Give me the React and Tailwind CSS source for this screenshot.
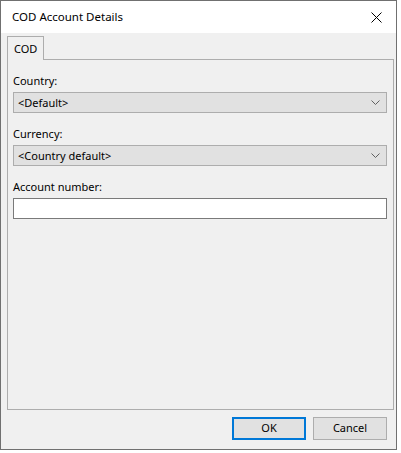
import React from 'react';

const font = { fontFamily: '"Segoe UI", "Noto Sans", "Liberation Sans", sans-serif' };

function Chevron() {
  return (
    <svg width="9" height="5" viewBox="0 0 9 5" className="shrink-0">
      <path d="M0.5 0.5 L4.5 4.5 L8.5 0.5" fill="none" stroke="#606060" strokeWidth="1" />
    </svg>
  );
}

function Select({ value }) {
  return (
    <div className="flex items-center justify-between h-[21px] w-[374px] border border-[#adadad] bg-[#e1e1e1] pl-[4px] pr-[6px]">
      <span className="text-[11px] leading-[16px] text-black">{value}</span>
      <Chevron />
    </div>
  );
}

function Field({ label, children }) {
  return (
    <div className="flex flex-col">
      <div className="h-[16px] text-[11px] leading-[16px] text-black mb-[3px]">{label}</div>
      {children}
    </div>
  );
}

export default function App() {
  return (
    <div className="w-[401px] h-[453px] bg-white" style={font}>
      <div className="w-[397px] h-[450px] border border-[#707070] flex flex-col bg-[#f0f0f0]">
        <div className="h-[32px] bg-white flex items-center justify-between pl-[11px] pr-[10px]">
          <span className="text-[11.5px] leading-[16px] text-black">COD Account Details</span>
          <svg width="11" height="11" viewBox="0 0 11 11" className="mr-[4px]">
            <path d="M0.5 0.5 L10.5 10.5 M10.5 0.5 L0.5 10.5" stroke="#000" strokeWidth="1" />
          </svg>
        </div>
        <div className="flex-1 flex flex-col px-[6px] pt-[3px]">
          <div className="flex">
            <div className="h-[24px] w-[37px] border border-b-0 border-[#adadad] bg-[#f0f0f0] text-[11px] leading-[16px] text-black pl-[6px] pt-[4px] -mb-px relative z-10">
              COD
            </div>
          </div>
          <div className="h-[351px] w-[387px] border border-[#adadad] pl-[5px] pt-[13px] flex flex-col gap-[13px]">
            <Field label="Country:">
              <Select value="<Default>" />
            </Field>
            <Field label="Currency:">
              <Select value="<Country default>" />
            </Field>
            <Field label="Account number:">
              <div className="h-[21px] w-[374px] border border-[#7a7a7a] bg-white"></div>
            </Field>
          </div>
          <div className="flex justify-end gap-[7px] pt-[7px] pr-[3px]">
            <button className="w-[74px] h-[23px] border-2 border-[#0078d7] bg-[#e1e1e1] text-[11px] text-black">OK</button>
            <button className="w-[74px] h-[23px] border border-[#adadad] bg-[#e1e1e1] text-[11px] text-black">Cancel</button>
          </div>
        </div>
      </div>
    </div>
  );
}
